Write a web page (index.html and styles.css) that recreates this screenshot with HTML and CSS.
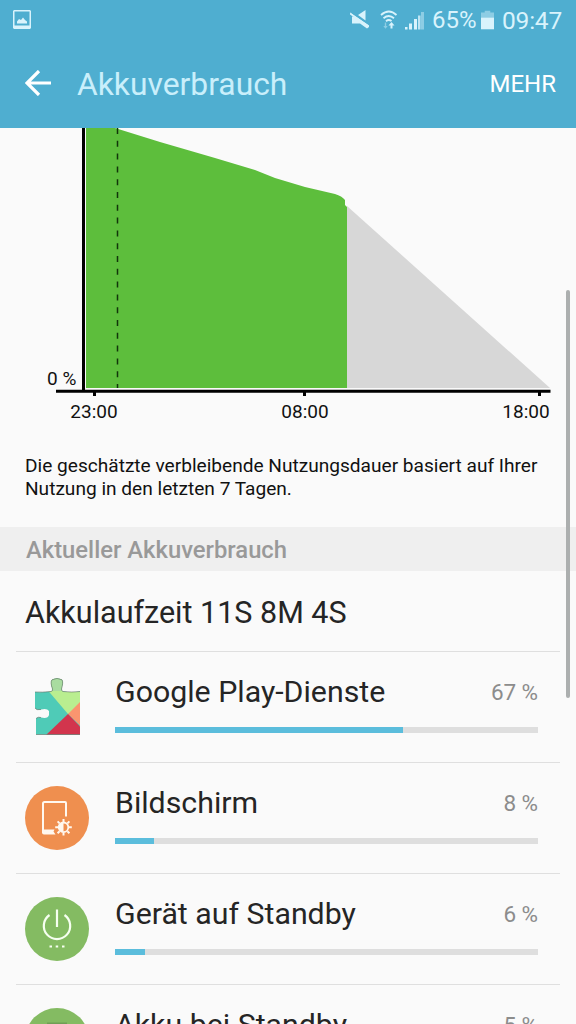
FILE: index.html
```html
<!DOCTYPE html>
<html lang="de">
<head>
    <meta charset="UTF-8">
    <meta name="viewport" content="width=device-width, initial-scale=1.0">
    <title>Akkuverbrauch</title>
    <link rel="stylesheet" href="styles.css">
</head>
<body>
    <header class="header">
        <div class="status-bar">
            <svg class="status-picture" width="18" height="20" viewBox="0 0 18 20">
                <path fill-rule="evenodd" d="M1 0h16l1 1v17l-1 1H1l-1-1V1zM1.5 1.5v14h15v-14z"/>
                <path d="M4 13.500v-2l2-2.500 2 1 2-2.500 2 2.500 2 1.500v2z"/>
            </svg>
            <div class="status-right">
                <svg class="status-icons" width="76" height="22" viewBox="0 0 76 22">
                    <!-- muted speaker -->
                    <path d="M8 5l7.500-5v10.500zM2 6.500h3.500L19 15.500v1.500l-2 1.500-7-5H2z"/>
                    <path d="M0 3.200l18.500 12.800" stroke="#d9f3fc" stroke-width="2" fill="none"/>
                    <path d="M2 2.700l17.500 12" stroke="#4faed0" stroke-width="1.300" fill="none"/>
                    <!-- wifi -->
                    <path d="M31 5q8-7 15.500 0M33.500 8.200q5.300-4.500 10.500 0M36 11.200q2.800-2.400 5.500 0" fill="none" stroke="#d9f3fc" stroke-width="1.800"/>
                    <path d="M40.500 18.500v-3h-2l3-3.500 3 3.500h-2v3z"/>
                    <path class="faint" d="M34.800 12.500v3.500h-1.500l2.200 2.800 2.200-2.800h-1.500v-3.500z"/>
                    <!-- signal -->
                    <path d="M55 17h2.500v2.500H55zM59 13.500h3v6h-3zM64 9h3v10.500h-3z"/>
                    <path d="M68 5.500h2.500v14H68z" opacity="0.8"/>
                    <path class="faint" d="M71 2h3v17.500h-3z"/>
                </svg>
                <span class="percent">65%</span>
                <svg class="battery" width="13" height="20" viewBox="0 0 14 20">
                    <path class="faint" d="M4 0h6v2h4v6H0V2h4z"/>
                    <path d="M0 7.500h14V20H0z"/>
                </svg>
                <span class="clock">09:47</span>
            </div>
        </div>
        <div class="title-bar">
            <svg class="back" width="26" height="26" viewBox="0 0 26 26">
                <path d="M26 13H2.500M14 1L2 13l12 12" fill="none" stroke="#fff" stroke-width="3.200"/>
            </svg>
            <h1>Akkuverbrauch</h1>
            <span class="more">MEHR</span>
        </div>
    </header>

    <main>
        <svg class="chart" width="576" height="304" viewBox="0 128 576 304">
            <path fill="#d7d7d7" d="M347 206L550 388H347z"/>
            <path fill="#5dbe3c" d="M86 128H115L160 142L215 158L255 170L275 178L305 187L335 194Q342 196 345 200V205L347 207V388H86z"/>
            <path d="M117.500 128V388" stroke="#12350a" stroke-width="1.500" stroke-dasharray="6 6.800"/>
            <path d="M83.500 128V391M56 391.300H550.500" stroke="#000" stroke-width="3"/>
            <path d="M94.500 391V396M304.500 391V396M539.500 391V396" stroke="#000" stroke-width="3"/>
            <text x="47" y="385">0 %</text>
            <text x="94" y="418" text-anchor="middle">23:00</text>
            <text x="305" y="418" text-anchor="middle">08:00</text>
            <text x="526" y="418" text-anchor="middle">18:00</text>
        </svg>

        <p class="estimate">Die geschätzte verbleibende Nutzungsdauer basiert auf Ihrer<br>Nutzung in den letzten 7 Tagen.</p>
        <h2>Aktueller Akkuverbrauch</h2>
        <p class="runtime">Akkulaufzeit 11S 8M 4S</p>

        <ul class="usage">
            <li>
                <svg class="icon" width="64" height="64" viewBox="0 -3 64 64">
                    <!-- puzzle piece -->
                    <clipPath id="piece">
                        <path d="M10 14Q17 14.500 26 13.500Q28 13 27.500 11Q25 4 27 1.800Q32-1 37 1.800Q38.500 4 36.500 11Q36.500 13 38 13.500Q47 14.500 55 13.500V56.500H11V40.500Q13 38.500 16 39.500Q23 41 24 37V33Q22 30 16 31.500Q11 32.500 10 30z"/>
                    </clipPath>
                    <g clip-path="url(#piece)">
                        <path fill="#4fcbb7" d="M0 0h64v64H0z"/>
                        <path fill="#b9ee90" d="M20 9V0h44v27L43 36z"/>
                        <path fill="#a9dca0" d="M24 0h16v13H24z"/>
                        <path fill="#fa956f" d="M64 15L43 36l21 20z"/>
                        <path fill="#d2354d" d="M43 36L20 58h44z"/>
                    </g>
                    <path d="M10 14Q17 14.500 26 13.500Q28 13 27.500 11Q25 4 27 1.800Q32-1 37 1.800Q38.500 4 36.500 11Q36.500 13 38 13.500Q47 14.500 55 13.500M11 40.500Q13 38.500 16 39.500M10 30Q11 32.500 16 31.500M11 56.500H55" fill="none" stroke="#5d6a60" stroke-opacity="0.600"/>
                </svg>
                <div class="info">
                    <div class="line"><span class="name">Google Play-Dienste</span><span class="value">67 %</span></div>
                    <div class="track"><div class="fill" style="width: 68%"></div></div>
                </div>
            </li>
            <li>
                <svg class="icon" width="64" height="64" viewBox="0 0 64 64">
                    <circle cx="32" cy="32" r="32" fill="#ef8f4f"/>
                    <path d="M41 30.500V17Q41 16 40 16H19.500Q18 16 18 17.500V47" fill="none" stroke="#fff8ef" stroke-width="2"/>
                    <path fill="#fff8ef" d="M17 43.500h12.500l-1 2 2 3H19Q17 48.500 17 46.500z"/>
                    <path d="M38.500 33v3M38.500 46.500v3M30.200 41.300h3M43.800 41.300h3M32.600 35.400l2 2M42.400 45.200l2 2M32.600 47.200l2-2M42.400 37.400l2-2" stroke="#fff8ef" stroke-width="2"/>
                    <circle cx="38.500" cy="41.300" r="4.800" fill="none" stroke="#fff8ef" stroke-width="1.800"/>
                    <path fill="#fff8ef" d="M38.500 36.500a4.800 4.800 0 0 0 0 9.600z"/>
                </svg>
                <div class="info">
                    <div class="line"><span class="name">Bildschirm</span><span class="value">8 %</span></div>
                    <div class="track"><div class="fill" style="width: 9.200%"></div></div>
                </div>
            </li>
            <li>
                <svg class="icon" width="64" height="64" viewBox="0 0 64 64">
                    <circle cx="32" cy="32" r="32" fill="#84bb62"/>
                    <path d="M32 12.500V30M24.500 18a13.200 13.200 0 1 0 15 0" fill="none" stroke="#f6fff0" stroke-width="2.200"/>
                    <path d="M24.500 49.500h2.500M30.700 49.500h2.500M37 49.500h2.500" stroke="#f6fff0" stroke-width="2"/>
                </svg>
                <div class="info">
                    <div class="line"><span class="name">Gerät auf Standby</span><span class="value">6 %</span></div>
                    <div class="track"><div class="fill" style="width: 7.100%"></div></div>
                </div>
            </li>
            <li>
                <svg class="icon" width="64" height="64" viewBox="0 0 64 64">
                    <circle cx="32" cy="32" r="32" fill="#84bb62"/>
                    <path d="M22 15.500h20" stroke="#6f9f55" stroke-width="2"/>
                </svg>
                <div class="info">
                    <div class="line"><span class="name">Akku bei Standby</span><span class="value">5 %</span></div>
                    <div class="track"><div class="fill" style="width: 6%"></div></div>
                </div>
            </li>
        </ul>
    </main>
    <div class="scrollbar"></div>
</body>
</html>
```
FILE: styles.css
```css
* {
    box-sizing: border-box;
}

body {
    margin: 0;
    height: 1024px;
    overflow: hidden;
    background-color: #fafafa;
    font-family: Roboto, sans-serif;
    color: #252525;
}

h1, h2, p, ul {
    margin: 0;
    padding: 0;
    font-weight: 400;
}

main {
    height: 896px;
    overflow: hidden;
}

svg {
    display: block;
    flex: none;
}

.header {
    height: 128px;
    background-color: #4faed0;
}

.status-bar {
    display: flex;
    justify-content: space-between;
    height: 40px;
    padding: 0 14px 0 13px;
    color: #d9f3fc;
    fill: #d9f3fc;
    font-size: 24.5px;
    line-height: 41px;
}

.status-picture {
    margin-top: 10px;
}

.status-right {
    display: flex;
}

.status-icons {
    margin: 10px 6px 0 0;
}

.percent {
    width: 49px;
    font-size: 24px;
}

.battery {
    margin: 10px 8px 0 0;
}

.clock {
    width: 60px;
    letter-spacing: -0.2px;
}

.faint {
    opacity: 0.45;
}

.title-bar {
    display: flex;
    align-items: center;
    height: 88px;
    padding: 0 20px 0 25px;
}

.back {
    margin-top: -2px;
}

h1 {
    flex: 1;
    margin-left: 26px;
    color: #c9effb;
    font-size: 31.8px;
    line-height: 40px;
}

.more {
    color: #fff;
    font-size: 24px;
}

.chart text {
    font-size: 19px;
    fill: #111;
}

.estimate {
    height: 95px;
    padding: 22px 0 0 25px;
    color: #111;
    font-size: 19.1px;
    line-height: 23px;
    white-space: nowrap;
}

h2 {
    height: 44px;
    padding-left: 26px;
    background-color: #efefef;
    color: #999;
    font-size: 23.8px;
    font-weight: 500;
    line-height: 47px;
}

.runtime {
    height: 80px;
    padding-left: 25px;
    font-size: 30.5px;
    line-height: 84px;
}

.usage {
    margin: 0 16px;
    list-style: none;
}

.usage li {
    display: flex;
    height: 111px;
    padding: 23px 22px 0 9px;
    border-top: 1px solid #dfdfdf;
}

.info {
    flex: 1;
    margin-left: 26px;
}

.line {
    display: flex;
    justify-content: space-between;
    height: 52px;
    line-height: 34px;
}

.name {
    font-size: 30.3px;
}

.value {
    color: #8c8c8c;
    font-size: 22.5px;
    letter-spacing: -0.1px;
}

.track {
    height: 6px;
    background-color: #dedede;
}

.fill {
    height: 100%;
    background-color: #5bbddc;
}

/* overlay scroll indicator */
.scrollbar {
    position: absolute;
    top: 290px;
    right: 6px;
    width: 4px;
    height: 408px;
    border-radius: 2px;
    background-color: #acafaf;
}
```
